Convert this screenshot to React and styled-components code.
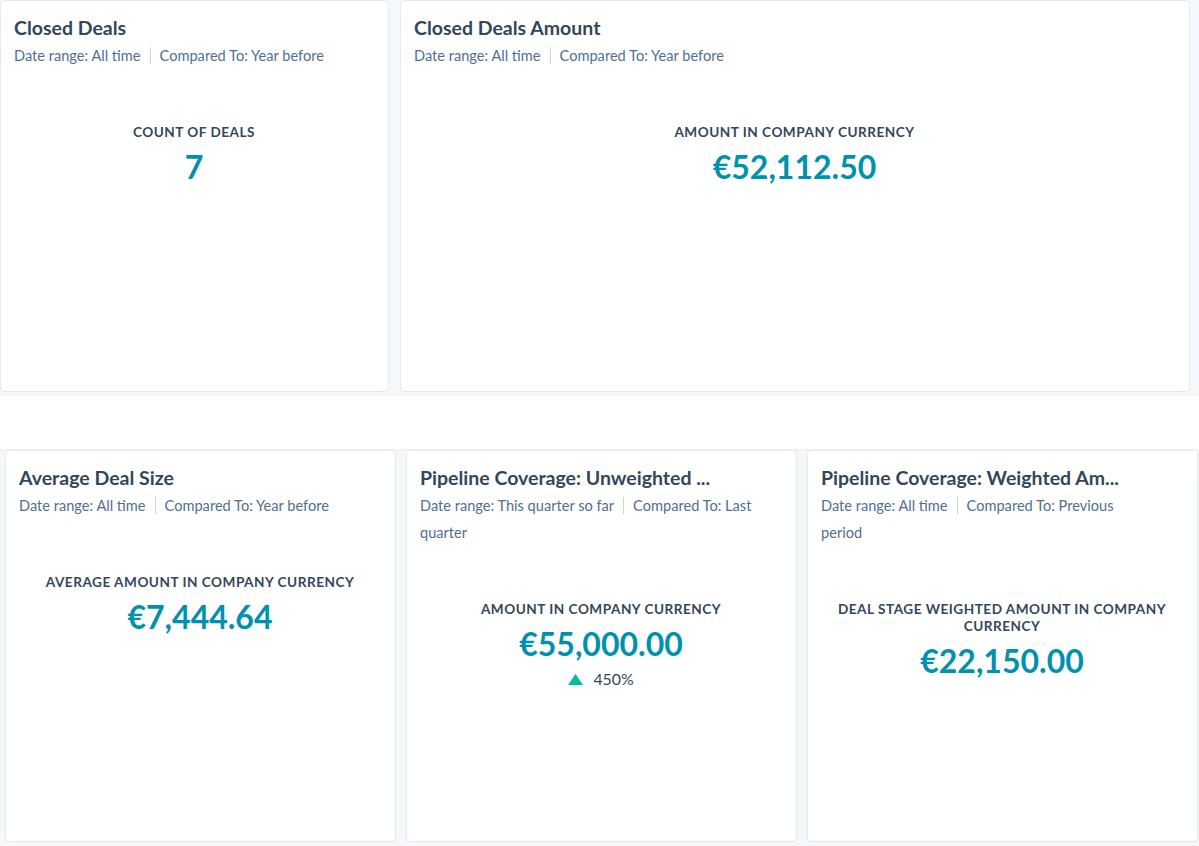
import React from 'react';
import styled, {createGlobalStyle} from "styled-components";

const GlobalStyle = createGlobalStyle`
  html, body {
    margin: 0;
    padding: 0;
    background: #ffffff;
    font-family: "Lato", "Noto Sans", sans-serif;
    color: #33475b;
  }
`;

const Page = styled.div`
  width: 1199px;
  height: 846px;
  overflow: hidden;
  display: flex;
  flex-direction: column;
`;

const Row = styled.div`
  display: grid;
  grid-template-columns: ${props => props.columns};
  column-gap: ${props => props.gap}px;
  padding: ${props => props.pad};
  background: #f5f8fa;
  border-top: ${props => props.topLine ? "1px solid #eaf0f6" : "none"};
`;

const Spacer = styled.div`
  height: 54px;
  background: #ffffff;
`;

const Card = styled.div`
  box-sizing: border-box;
  height: ${props => props.height}px;
  background: #ffffff;
  border: 1px solid #e3e9ef;
  border-radius: 4px;
  padding: 15px 14px 0 13px;
  display: flex;
  flex-direction: column;
  min-width: 0;
`;

const Title = styled.h2`
  margin: 0;
  font-size: 19.5px;
  line-height: 24px;
  font-weight: 700;
  color: #33475b;
  white-space: nowrap;
  overflow: hidden;
  text-overflow: ellipsis;
`;

const Meta = styled.div`
  margin-top: 2px;
  font-size: 14.6px;
  line-height: 27px;
  color: #516f90;
  padding-right: 27px;
`;

const MetaItem = styled.span`
  display: inline;
  & + & {
    border-left: 1px solid #cbd6e2;
    margin-left: 9px;
    padding-left: 9px;
  }
`;

const Body = styled.div`
  margin-top: 55px;
  display: flex;
  flex-direction: column;
  align-items: center;
  text-align: center;
`;

const Label = styled.div`
  font-size: 13.6px;
  line-height: 17px;
  font-weight: 700;
  letter-spacing: 0.5px;
  text-transform: uppercase;
  color: #33475b;
  padding: 0 10px;
`;

const Value = styled.div`
  margin-top: 8px;
  font-size: 32px;
  line-height: 36px;
  font-weight: 700;
  color: #0091ae;
`;

const Change = styled.div`
  margin-top: 7px;
  display: flex;
  align-items: center;
  gap: 10px;
  font-size: 15.8px;
  line-height: 20px;
  color: #33475b;
`;

const Triangle = () => (
    <svg width="15" height="11" viewBox="0 0 15 11">
        <path d="M7.5 0 L15 11 L0 11 Z" fill="#00bda5"/>
    </svg>
);

const topCards = [
    {title: "Closed Deals", range: "All time", compared: "Year before", label: "Count of deals", value: "7"},
    {title: "Closed Deals Amount", range: "All time", compared: "Year before", label: "Amount in company currency", value: "€52,112.50"},
];

const bottomCards = [
    {title: "Average Deal Size", range: "All time", compared: "Year before", label: "Average amount in company currency", value: "€7,444.64"},
    {title: "Pipeline Coverage: Unweighted ...", range: "This quarter so far", compared: "Last quarter", label: "Amount in company currency", value: "€55,000.00", change: "450%"},
    {title: "Pipeline Coverage: Weighted Am...", range: "All time", compared: "Previous period", label: "Deal stage weighted amount in company currency", value: "€22,150.00"},
];

const ReportCard = ({data, height}) => (
    <Card height={height}>
        <Title>{data.title}</Title>
        <Meta>
            <MetaItem>Date range: {data.range}</MetaItem>
            <MetaItem>Compared To: {data.compared}</MetaItem>
        </Meta>
        <Body>
            <Label>{data.label}</Label>
            <Value>{data.value}</Value>
            {data.change &&
                <Change>
                    <Triangle/>
                    {data.change}
                </Change>
            }
        </Body>
    </Card>
);

const App = () => {
    return (
        <>
            <GlobalStyle/>
            <Page>
                <Row columns="389px 790px" gap={11} pad="0 9px 4px 0">
                    {topCards.map(c => <ReportCard key={c.title} data={c} height={392}/>)}
                </Row>
                <Spacer/>
                <Row columns="391px 391px 391px" gap={10} pad="0 0 4px 5px" topLine>
                    {bottomCards.map(c => <ReportCard key={c.title} data={c} height={392}/>)}
                </Row>
            </Page>
        </>
    );
};

export default App;
